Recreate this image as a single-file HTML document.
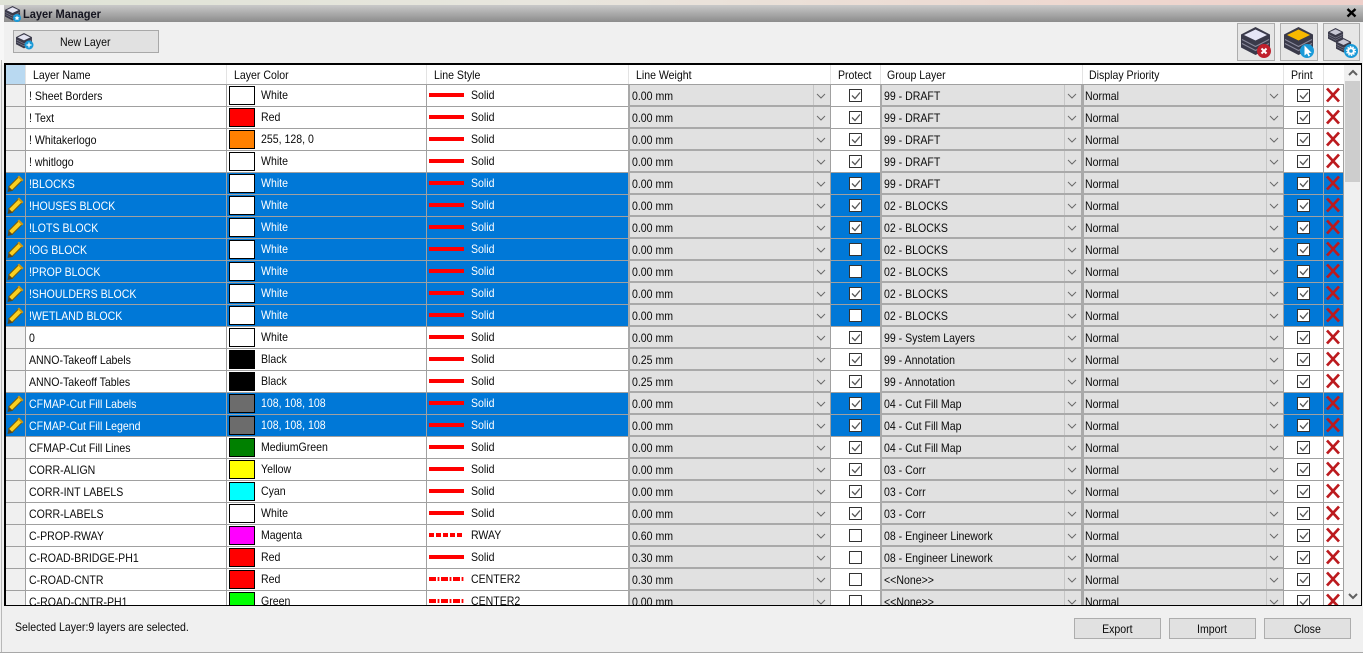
<!DOCTYPE html>
<html><head><meta charset="utf-8"><title>Layer Manager</title>
<style>
html,body{margin:0;padding:0;width:1363px;height:653px;overflow:hidden;background:#f0f0f0}
body{position:relative;font:12px/22px "Liberation Sans",sans-serif;color:#0a0a0a}
div{position:absolute;box-sizing:border-box}
.t{white-space:nowrap;transform:scaleX(.88);transform-origin:0 0}
.w{color:#fff}
.cb{top:85px;height:520px;border-left:2px solid #a9a9a9;background:repeating-linear-gradient(#e1e1e1 0 20px,#a9a9a9 20px 22px)}
.band{left:6px;width:1338px;background:#0078d7}
.vl{top:85px;height:520px;width:1px;background:#a0a0a0}
.hs{top:65px;height:19px;width:1px;background:#e3e3e3}
.btn{background:#e1e1e1;border:1px solid #adadad;text-align:center;line-height:21px}
.btn span{display:inline-block;transform:scaleX(.88)}
.h{top:65px;line-height:20px;white-space:nowrap;transform:scaleX(.88);transform-origin:0 0}
</style></head><body>

<div style="left:0;top:0;width:1363px;height:5px;background:linear-gradient(90deg,#dfe3d6,#e8e6de 40%,#eed8d0 80%,#eecfca)"></div>
<div style="left:0;top:5px;width:4px;height:60px;background:#f7f7f7"></div>
<div style="left:1px;top:60px;width:1px;height:592px;background:#b8b8b8"></div>
<div style="left:4px;top:5px;width:1359px;height:17px;background:linear-gradient(#c9c9c9,#8c8c8c)"></div>
<div style="left:23px;top:5px;height:17px;line-height:18px;font-weight:bold;color:#151520;white-space:nowrap;transform:scaleX(.92);transform-origin:0 0">Layer Manager</div>

<div class="btn" style="left:13px;top:30px;width:146px;height:23px;border-width:1.5px;border-color:#a8a8a8;text-align:left;padding-left:46px;line-height:23px"><span style="transform-origin:0 0">New Layer</span></div>
<div class="btn" style="left:1237px;top:23px;width:38px;height:38px;border-width:1.5px;background:#e6e6e6"></div>
<div class="btn" style="left:1280px;top:23px;width:38px;height:38px;border-width:1.5px;background:#e6e6e6"></div>
<div class="btn" style="left:1323px;top:23px;width:37px;height:38px;border-width:1.5px;background:#e6e6e6"></div>

<div id="grid" style="left:0;top:0;width:1363px;height:605px;overflow:hidden">
<div style="left:5px;top:64px;width:1357px;height:541px;background:#fff"></div>
<div style="left:6px;top:65px;width:20px;height:19px;background:#b9d9f1"></div>
<div style="left:6px;top:85px;width:19px;height:520px;background:#f0f0f0"></div>

<div class="band" style="top:173px;height:154px"></div>
<div class="band" style="top:393px;height:44px"></div>

<div style="left:5px;top:84px;width:1339px;height:521px;background:repeating-linear-gradient(#a0a0a0 0 1px,transparent 1px 22px)"></div>
<div class="vl" style="left:25px"></div><div class="vl" style="left:226px"></div><div class="vl" style="left:426px"></div>
<div class="vl" style="left:830px"></div><div class="vl" style="left:880px"></div><div class="vl" style="left:1283px"></div>
<div class="vl" style="left:1323px"></div><div class="vl" style="left:1343px"></div>
<div class="hs" style="left:25px"></div><div class="hs" style="left:226px"></div><div class="hs" style="left:426px"></div><div class="hs" style="left:628px"></div><div class="hs" style="left:830px"></div><div class="hs" style="left:880px"></div><div class="hs" style="left:1082px"></div><div class="hs" style="left:1283px"></div><div class="hs" style="left:1323px"></div>

<div class="cb" style="left:628px;width:202px"></div>
<div class="cb" style="left:880px;width:201px;border-right:0"></div>
<div style="left:1081px;top:85px;width:1px;height:520px;background:#a9a9a9"></div>
<div class="cb" style="left:1082px;width:201px"></div>

<div style="left:1344px;top:65px;width:17px;height:540px;background:#f0f0f0"></div>
<div style="left:1345px;top:81px;width:15px;height:101px;background:#cdcdcd"></div>

<svg width="1363" height="605" viewBox="0 0 1363 605" style="position:absolute;left:0;top:0">
<defs>
<g id="row">
<rect x="229.500" y="1.500" width="25" height="18" stroke="#000"/>
<path d="M813.500 0V20M1064.500 0V20M1266.500 0V20" stroke="#c6c6c6" fill="none"/>
<path d="M817 9l4 4 4-4M1068 9l4 4 4-4M1270 9l4 4 4-4" stroke="#6a6a6a" fill="none"/>
<rect x="849.500" y="4.500" width="12" height="12" fill="#fff" stroke="#333"/>
<rect x="1297.500" y="4.500" width="12" height="12" fill="#fff" stroke="#333"/>
<path d="M1300 10.500l3 3 5-6" stroke="#555" stroke-width="1.300" fill="none"/>
<path d="M1327 3.500L1339 16.500M1339 3.500L1327 16.500" stroke="#bc1a1e" stroke-width="2.700" fill="none"/>
</g>
<path id="ck" d="M852 10.500l3 3 5-6" stroke="#555" stroke-width="1.300" fill="none"/>
<rect id="so" x="429" y="8" width="35" height="4" fill="#f00"/>
<path id="ce" d="M429 10H464" stroke="#f00" stroke-width="4" stroke-dasharray="7 1.600 1.800 1.600" fill="none"/>
<path id="rw" d="M429 10H464" stroke="#f00" stroke-width="4" stroke-dasharray="5 2" fill="none"/>
<g id="pe">
<path d="M10 16L20.500 5.500" stroke="#7a5c08" stroke-width="6" fill="none"/>
<path d="M10 16L20.500 5.500" stroke="#fbd020" stroke-width="4" fill="none"/>
<path d="M7.500 19l1.200-5.500 4.300 4.300z" fill="#5a4820"/>
<path d="M19 2.500l4.500 4.500-1.500 1.500-4.500-4.500z" fill="#d09810"/>
</g>
</defs>
<use href="#row" y="85" fill="#fff"/><use href="#row" y="107" fill="#f00"/><use href="#row" y="129" fill="#ff8000"/><use href="#row" y="151" fill="#fff"/>
<use href="#row" y="173" fill="#fff"/><use href="#row" y="195" fill="#fff"/><use href="#row" y="217" fill="#fff"/><use href="#row" y="239" fill="#fff"/>
<use href="#row" y="261" fill="#fff"/><use href="#row" y="283" fill="#fff"/><use href="#row" y="305" fill="#fff"/><use href="#row" y="327" fill="#fff"/>
<use href="#row" y="349" fill="#000"/><use href="#row" y="371" fill="#000"/><use href="#row" y="393" fill="#6c6c6c"/><use href="#row" y="415" fill="#6c6c6c"/>
<use href="#row" y="437" fill="#008000"/><use href="#row" y="459" fill="#ff0"/><use href="#row" y="481" fill="#0ff"/><use href="#row" y="503" fill="#fff"/>
<use href="#row" y="525" fill="#f0f"/><use href="#row" y="547" fill="#f00"/><use href="#row" y="569" fill="#f00"/><use href="#row" y="591" fill="#0f0"/>

<use href="#ck" y="85"/><use href="#ck" y="107"/><use href="#ck" y="129"/><use href="#ck" y="151"/><use href="#ck" y="173"/><use href="#ck" y="195"/><use href="#ck" y="217"/><use href="#ck" y="283"/><use href="#ck" y="327"/><use href="#ck" y="349"/><use href="#ck" y="371"/><use href="#ck" y="393"/><use href="#ck" y="415"/><use href="#ck" y="437"/><use href="#ck" y="459"/><use href="#ck" y="481"/><use href="#ck" y="503"/>

<use href="#so" y="85"/><use href="#so" y="107"/><use href="#so" y="129"/><use href="#so" y="151"/><use href="#so" y="173"/><use href="#so" y="195"/><use href="#so" y="217"/><use href="#so" y="239"/><use href="#so" y="261"/><use href="#so" y="283"/><use href="#so" y="305"/><use href="#so" y="327"/><use href="#so" y="349"/><use href="#so" y="371"/><use href="#so" y="393"/><use href="#so" y="415"/><use href="#so" y="437"/><use href="#so" y="459"/><use href="#so" y="481"/><use href="#so" y="503"/><use href="#rw" y="525"/><use href="#so" y="547"/><use href="#ce" y="569"/><use href="#ce" y="591"/>

<use href="#pe" y="173"/><use href="#pe" y="195"/><use href="#pe" y="217"/><use href="#pe" y="239"/><use href="#pe" y="261"/><use href="#pe" y="283"/><use href="#pe" y="305"/><use href="#pe" y="393"/><use href="#pe" y="415"/>

<path d="M1349 75l4-4 4 4M1349 594l4 4 4-4" stroke="#606060" stroke-width="2" fill="none"/>
</svg>

<div class="h" style="left:33px">Layer Name</div>
<div class="h" style="left:234px">Layer Color</div>
<div class="h" style="left:434px">Line Style</div>
<div class="h" style="left:636px">Line Weight</div>
<div class="h" style="left:838px">Protect</div>
<div class="h" style="left:887px">Group Layer</div>
<div class="h" style="left:1089px">Display Priority</div>
<div class="h" style="left:1291px">Print</div>

<div class="t" style="left:29px;top:85px">! Sheet Borders<br>! Text<br>! Whitakerlogo<br>! whitlogo<br><span class="w">!BLOCKS<br>!HOUSES BLOCK<br>!LOTS BLOCK<br>!OG BLOCK<br>!PROP BLOCK<br>!SHOULDERS BLOCK<br>!WETLAND BLOCK<br></span>0<br>ANNO-Takeoff Labels<br>ANNO-Takeoff Tables<br><span class="w">CFMAP-Cut Fill Labels<br>CFMAP-Cut Fill Legend<br></span>CFMAP-Cut Fill Lines<br>CORR-ALIGN<br>CORR-INT LABELS<br>CORR-LABELS<br>C-PROP-RWAY<br>C-ROAD-BRIDGE-PH1<br>C-ROAD-CNTR<br>C-ROAD-CNTR-PH1</div>

<div class="t" style="left:261px;top:84px">White<br>Red<br>255, 128, 0<br>White<br><span class="w">White<br>White<br>White<br>White<br>White<br>White<br>White<br></span>White<br>Black<br>Black<br><span class="w">108, 108, 108<br>108, 108, 108<br></span>MediumGreen<br>Yellow<br>Cyan<br>White<br>Magenta<br>Red<br>Red<br>Green</div>

<div class="t" style="left:471px;top:84px">Solid<br>Solid<br>Solid<br>Solid<br><span class="w">Solid<br>Solid<br>Solid<br>Solid<br>Solid<br>Solid<br>Solid<br></span>Solid<br>Solid<br>Solid<br><span class="w">Solid<br>Solid<br></span>Solid<br>Solid<br>Solid<br>Solid<br>RWAY<br>Solid<br>CENTER2<br>CENTER2</div>

<div class="t" style="left:632px;top:85px">0.00 mm<br>0.00 mm<br>0.00 mm<br>0.00 mm<br>0.00 mm<br>0.00 mm<br>0.00 mm<br>0.00 mm<br>0.00 mm<br>0.00 mm<br>0.00 mm<br>0.00 mm<br>0.25 mm<br>0.25 mm<br>0.00 mm<br>0.00 mm<br>0.00 mm<br>0.00 mm<br>0.00 mm<br>0.00 mm<br>0.60 mm<br>0.30 mm<br>0.30 mm<br>0.00 mm</div>

<div class="t" style="left:884px;top:85px">99 - DRAFT<br>99 - DRAFT<br>99 - DRAFT<br>99 - DRAFT<br>99 - DRAFT<br>02 - BLOCKS<br>02 - BLOCKS<br>02 - BLOCKS<br>02 - BLOCKS<br>02 - BLOCKS<br>02 - BLOCKS<br>99 - System Layers<br>99 - Annotation<br>99 - Annotation<br>04 - Cut Fill Map<br>04 - Cut Fill Map<br>04 - Cut Fill Map<br>03 - Corr<br>03 - Corr<br>03 - Corr<br>08 - Engineer Linework<br>08 - Engineer Linework<br>&lt;&lt;None&gt;&gt;<br>&lt;&lt;None&gt;&gt;</div>

<div class="t" style="left:1085px;top:85px">Normal<br>Normal<br>Normal<br>Normal<br>Normal<br>Normal<br>Normal<br>Normal<br>Normal<br>Normal<br>Normal<br>Normal<br>Normal<br>Normal<br>Normal<br>Normal<br>Normal<br>Normal<br>Normal<br>Normal<br>Normal<br>Normal<br>Normal<br>Normal</div>
</div>

<div style="left:4px;top:63px;width:1358px;height:543px;border:2px solid #000;border-bottom-width:1px;border-right-width:1.5px"></div>

<div class="t" style="left:15px;top:616px">Selected Layer:9 layers are selected.</div>
<div class="btn" style="left:1074px;top:618px;width:87px;height:21px"><span>Export</span></div>
<div class="btn" style="left:1169px;top:618px;width:87px;height:21px"><span>Import</span></div>
<div class="btn" style="left:1264px;top:618px;width:87px;height:21px"><span>Close</span></div>
<div style="left:0;top:652px;width:1363px;height:1px;background:#a8a8a8"></div>

<svg width="1363" height="70" viewBox="0 0 1363 70" style="position:absolute;left:0;top:0">
<defs>
<g id="st">
<path d="M14.500 0L29 7.500V20.500L14.500 28L0 20.500V7.500Z" fill="#3a3a4a"/>
<path d="M1 12.500L14.500 19.500L28 12.500M1 16.500L14.500 23.500L28 16.500" stroke="#8a8a9c" stroke-width="1" fill="none"/>
<path d="M14.500 2.500L26 8L14.500 13.500L3 8Z"/>
</g>
</defs>
<use href="#st" transform="translate(5,6) scale(.52)" fill="#e4e4f2"/>
<circle cx="17" cy="18" r="4" fill="#1a9ad8"/><path d="M17 15.500l.8 1.700 1.700.2-1.300 1.200.4 1.700-1.600-.9-1.600.9.400-1.700-1.300-1.200 1.700-.2z" fill="#fff"/>
<use href="#st" transform="translate(16,33) scale(.55)" fill="#e4e4f2"/>
<circle cx="29" cy="45" r="4.500" fill="#1a9ad8"/><path d="M29 42.500v5M26.500 45h5" stroke="#fff" stroke-width="1.200"/>
<use href="#st" transform="translate(1241,27)" fill="#e6e6f6"/>
<circle cx="1264" cy="51" r="7" fill="#c0202c"/><path d="M1261.500 48.500l5 5M1266.500 48.500l-5 5" stroke="#fff" stroke-width="2"/>
<use href="#st" transform="translate(1284,27)" fill="#f7b900"/>
<circle cx="1307" cy="51" r="7" fill="#1a9ad8"/><path d="M1304.500 45.500v10l2.500-2 1.500 3 1.500-.8-1.500-2.800h3.200z" fill="#fff"/>
<path d="M1336 36l7 5" stroke="#3c3c4c" stroke-width="1.500"/>
<use href="#st" transform="translate(1328,28) scale(.52)" fill="#c8c8d6"/>
<use href="#st" transform="translate(1336,38) scale(.52)" fill="#c8c8d6"/>
<circle cx="1351" cy="51" r="7" fill="#1a9ad8"/><circle cx="1351" cy="51" r="2.800" fill="none" stroke="#fff" stroke-width="2"/><circle cx="1351" cy="51" r="4.300" fill="none" stroke="#fff" stroke-width="1.300" stroke-dasharray="1.500 1.200"/>
<path d="M1347.500 9l8 7.500M1355.500 9l-8 7.500" stroke="#000" stroke-width="2.400"/>
</svg>
</body></html>
